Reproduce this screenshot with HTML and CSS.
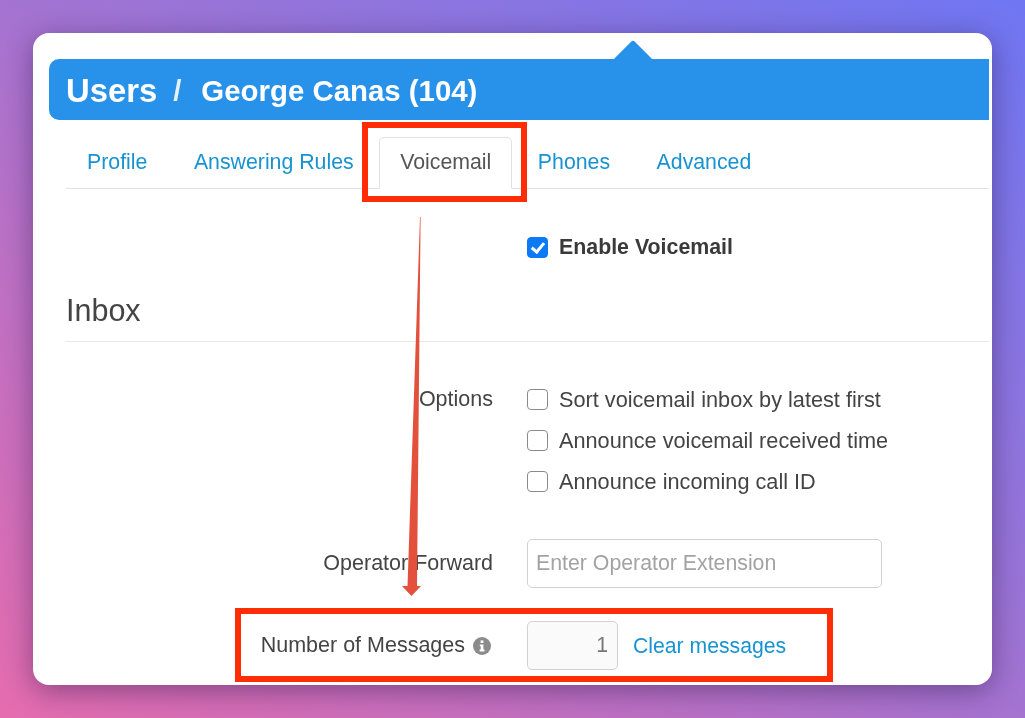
FILE: index.html
```html
<!DOCTYPE html>
<html lang="en">
<head>
  <meta charset="UTF-8" />
  <title>Users / George Canas (104)</title>
  <link rel="stylesheet" href="styles.css">
</head>
<body>
  <div class="window">
    <div class="caret"></div>
    <div class="title-bar">
      <span class="title-root">Users</span>
      <span class="title-sep">/</span>
      <span class="title-user">George Canas (104)</span>
    </div>

    <div class="content">
      <ul class="tabs">
        <li><a href="#">Profile</a></li>
        <li><a href="#">Answering Rules</a></li>
        <li class="active"><a href="#">Voicemail</a></li>
        <li><a href="#">Phones</a></li>
        <li><a href="#">Advanced</a></li>
      </ul>

      <div class="row enable-row">
        <span class="row-label"></span>
        <label class="check strong"><input type="checkbox" checked> Enable Voicemail</label>
      </div>

      <h2 class="section-title">Inbox</h2>

      <div class="row options-row">
        <span class="row-label">Options</span>
        <div class="check-list">
          <label class="check"><input type="checkbox"> Sort voicemail inbox by latest first</label>
          <label class="check"><input type="checkbox"> Announce voicemail received time</label>
          <label class="check"><input type="checkbox"> Announce incoming call ID</label>
        </div>
      </div>

      <div class="row operator-row">
        <span class="row-label">Operator Forward</span>
        <input class="text-input" type="text" placeholder="Enter Operator Extension">
      </div>

      <div class="row messages-row">
        <span class="row-label">Number of Messages
          <svg class="info" width="18" height="18" viewBox="0 0 18 18">
            <circle cx="9" cy="9" r="9" fill="#8b8b8b"/>
            <rect x="7.6" y="3.4" width="2.8" height="2.6" fill="#fff"/>
            <path d="M6.8 7.4h3.6v5.2h1.1v1.8H6.6v-1.8h1.1V9.2H6.8z" fill="#fff"/>
          </svg>
        </span>
        <input class="text-input count-input" type="text" value="1" readonly>
        <a class="clear-link" href="#">Clear messages</a>
      </div>
    </div>
  </div>

  <!-- annotations drawn on top of the screenshot -->
  <div class="mark mark-tab"></div>
  <div class="mark mark-messages"></div>
  <svg class="arrow" width="40" height="390" viewBox="0 0 40 390">
    <polygon points="20,0 20.6,0 17,369 21,369 11.5,379 2,369 7.5,369" fill="#e3503c"/>
  </svg>
</body>
</html>
```
FILE: styles.css
```css
html, body {
  margin: 0;
  height: 100%;
}
body {
  position: relative;
  box-sizing: border-box;
  height: 718px;
  padding: 33px;
  overflow: hidden;
  background: linear-gradient(215deg, #6f76f2 0%, #9a74d6 42%, #e56cae 100%);
  font-family: "Liberation Sans", Arial, sans-serif;
  font-size: 21.5px;
  color: #444;
}
.window {
  position: relative;
  box-sizing: border-box;
  height: 652px;
  padding: 26px 3px 0 16px;
  background: #fff;
  border-radius: 16px;
  box-shadow: 0 6px 28px rgba(40, 20, 70, 0.45);
  overflow: hidden;
  filter: blur(0.6px);
}
.caret {
  position: absolute;
  top: 13px;
  left: 585px;
  width: 30px;
  height: 30px;
  background: #2892ea;
  border-radius: 3px;
  transform: rotate(45deg);
}
.title-bar {
  display: flex;
  align-items: center;
  height: 61px;
  padding: 2px 0 0 17px;
  box-sizing: border-box;
  background: #2892ea;
  border-radius: 10px 0 0 10px;
  color: #fff;
  font-weight: bold;
  font-size: 29.4px;
}
.title-root {
  font-size: 32.8px;
}
.title-sep {
  margin: 0 20px 0 16px;
  color: #e6f1fb;
}
.content {
  padding-left: 17px;
}
.tabs {
  display: flex;
  height: 51px;
  margin: 17px 0 0;
  padding: 0;
  list-style: none;
  border-bottom: 1px solid #e2e2e2;
  font-size: 21.3px;
}
.tabs li {
  margin-right: 4.5px;
}
.tabs a {
  display: block;
  box-sizing: border-box;
  height: 51px;
  padding: 12px 20px 0;
  border: 1px solid transparent;
  color: #1793d1;
  text-decoration: none;
}
.tabs .active a {
  height: 52px;
  background: #fff;
  border-color: #e2e2e2;
  border-bottom-color: #fff;
  border-radius: 5px 5px 0 0;
  color: #555;
}
.row {
  display: grid;
  grid-template-columns: 427px auto 1fr;
  column-gap: 34px;
  align-items: center;
}
.row-label {
  text-align: right;
}
.enable-row {
  margin-top: 47px;
}
.section-title {
  margin: 33px 0 0;
  padding-bottom: 13px;
  border-bottom: 1px solid #e8e8e8;
  font-size: 30.5px;
  font-weight: normal;
  line-height: 36px;
  color: #444;
}
.options-row {
  align-items: start;
  margin-top: 46px;
}
.options-row .row-label {
  line-height: 23px;
}
.check-list {
  display: flex;
  flex-direction: column;
  gap: 18px;
  font-size: 21.7px;
}
.check {
  display: flex;
  align-items: center;
  gap: 11px;
  height: 23px;
  white-space: nowrap;
}
.strong {
  font-weight: bold;
  color: #3a3a3a;
  font-size: 21.35px;
}
.check input {
  appearance: none;
  position: relative;
  width: 21px;
  height: 21px;
  margin: 0;
  background: #fff;
  border: 1px solid #8a8a8a;
  border-radius: 4px;
}
.check input:checked {
  background: #0b7bf5;
  border-color: #0b7bf5;
}
.check input:checked::after {
  content: "";
  position: absolute;
  left: 6px;
  top: 2px;
  width: 5px;
  height: 10px;
  border: solid #fff;
  border-width: 0 3px 3px 0;
  transform: rotate(40deg);
}
.text-input {
  box-sizing: border-box;
  width: 355px;
  height: 49px;
  padding: 0 8px;
  background: #fff;
  border: 1px solid #d2d2d2;
  border-radius: 5px;
  font-family: inherit;
  font-size: 21.3px;
  color: #777;
  outline: none;
}
.text-input::placeholder {
  color: #a3a3a3;
}
.operator-row {
  margin-top: 46px;
}
.messages-row {
  grid-template-columns: 427px 91px 1fr;
  margin-top: 33px;
}
.messages-row .clear-link {
  margin-left: -19px;
}
.count-input {
  width: 91px;
  padding-right: 9px;
  background: #fafafa;
  text-align: right;
}
.clear-link {
  color: #1793d1;
  text-decoration: none;
  font-size: 21.2px;
}
.info {
  margin: 0 2px 0 2px;
  vertical-align: -3px;
}
.mark {
  position: absolute;
  box-sizing: border-box;
  border: 6px solid #ff2d06;
}
.mark-tab {
  left: 362px;
  top: 122px;
  width: 165px;
  height: 80px;
}
.mark-messages {
  left: 235px;
  top: 608px;
  width: 598px;
  height: 74px;
}
.arrow {
  position: absolute;
  left: 400px;
  top: 217px;
}
```
